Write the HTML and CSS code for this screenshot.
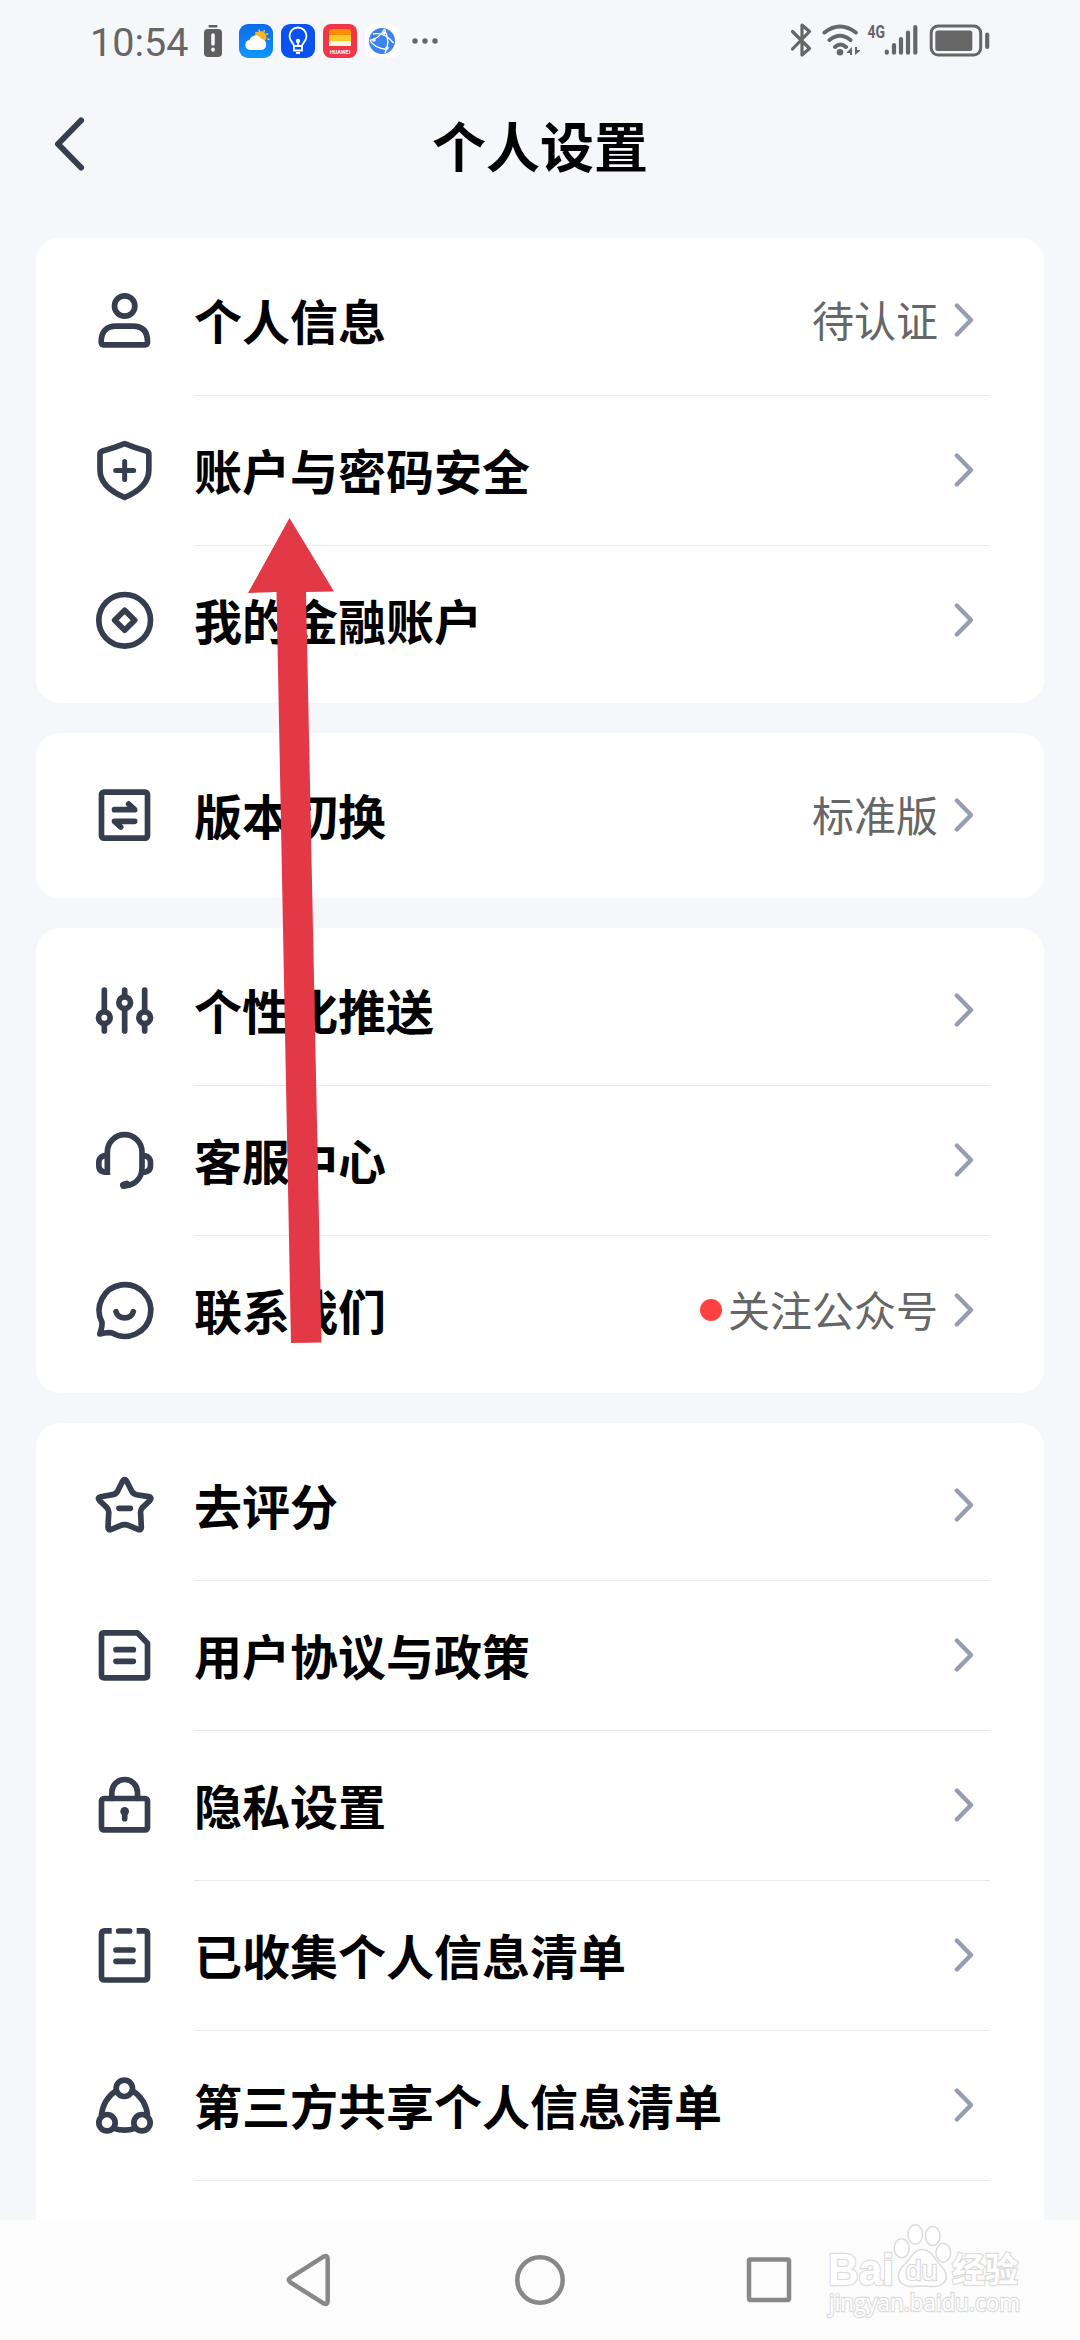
FILE: index.html
```html
<!DOCTYPE html>
<html lang="zh-CN">
<head>
<meta charset="utf-8">
<title>个人设置</title>
<link rel="stylesheet" href="styles.css">
</head>
<body>
<svg class="defs" width="0" height="0">
  <symbol id="chev" viewBox="0 0 24 40"><path d="M4.8 5.5 19 20 4.8 34.5"/></symbol>
</svg>
<div class="screen">
  <header class="status">
    <div class="status-left">
      <span class="time">10:54</span>
      <svg class="battery-low" width="20" height="34" viewBox="0 0 20 34"><rect x="5.500" y="1" width="9" height="2.400" rx="1"/><rect x="1" y="5" width="18" height="28" rx="4"/><path class="mark" d="M10 11v9M10 25.300v.6"/></svg>
      <svg class="app" width="34" height="34" viewBox="0 0 34 34"><defs><linearGradient id="sky" x2="0" y2="1"><stop stop-color="#0b6be6"/><stop offset="1" stop-color="#0c96ff"/></linearGradient></defs><rect width="34" height="34" rx="9" fill="url(#sky)"/><path d="M20 5.500 20.500 7.500M25.500 6 24.800 8M29 9.500 27.300 10.600M30.500 15.500 28.500 15M16.500 8 17.700 9.500" stroke="#ffd75a" stroke-width="1.300"/><circle cx="21.500" cy="13" r="6" fill="#ffb41f"/><path d="M11 26a5 5 0 0 1-.5-9.900 6.500 6.500 0 0 1 12-1.200A5.600 5.600 0 0 1 22 26Z" fill="#fff"/></svg>
      <svg class="app" width="34" height="34" viewBox="0 0 34 34"><rect width="34" height="34" rx="9" fill="#0b53f0"/><g fill="none" stroke="#fff" stroke-width="1.800"><path d="M13 22c0-3-4.500-4.500-4.500-10a8.500 8.500 0 0 1 17 0c0 5.500-4.500 7-4.500 10ZM13 23v3.500h8V23M15 29h4M17 18v4"/></g><circle cx="17" cy="17" r="2.200" fill="#fff"/></svg>
      <svg class="app" width="34" height="34" viewBox="0 0 34 34"><rect width="34" height="34" rx="8" fill="#f13549"/><path d="M6 11V8q0-3 3-3h16q3 0 3 3v3Z" fill="#ff8d00"/><path d="M6 11h22v6H6z" fill="#ffc629"/><path d="M6 17h22v5H6z" fill="#fff6df"/><text x="17" y="29.500" text-anchor="middle" class="brand">HUAWEI</text></svg>
      <svg class="app" width="34" height="34" viewBox="0 0 34 34"><rect width="34" height="34" rx="9" fill="#fff"/><circle cx="17" cy="17" r="13" fill="#3c82f0"/><path d="M5 16.500Q15 14 19.500 5M8 10Q20 8 28.500 19M19.500 5Q26 18 20 29M5 16.500Q9 24 22 25.500" fill="none" stroke="#fff" stroke-width="1.300"/><g fill="#fff"><circle cx="19" cy="9" r="1.700"/><circle cx="9" cy="16" r="1.700"/><circle cx="22" cy="24" r="1.700"/></g></svg>
      <svg class="more" width="26" height="6" viewBox="0 0 26 6"><circle cx="3" cy="3" r="2.700"/><circle cx="13" cy="3" r="2.700"/><circle cx="23" cy="3" r="2.700"/></svg>
    </div>
    <svg class="status-right" width="204" height="40" viewBox="0 0 204 40">
      <path class="line bt" d="M4.500 11.500 21.500 28.500 14 35V5L21.500 11.500 4.500 29"/>
      <path class="line wifi" d="M36.500 12.500Q52 .5 67.800 12.500M41.500 20Q52 11.500 62.500 20M47 27Q52.500 22 58 27"/>
      <circle cx="52" cy="32.300" r="3.300"/><path d="M59 32 64 27V35H62V33H59ZM72 31 67 35V27H69V30H72Z"/>
      <text class="net" x="79.500" y="18" textLength="17.500" lengthAdjust="spacingAndGlyphs">4G</text>
      <path class="line bars" d="M98.800 31.500V32.700M106 25V32.700M113 19V32.700M120 12.500V32.700M127.300 7V32.700"/>
      <rect class="shell" x="143.200" y="6" width="49.500" height="29" rx="7"/><rect x="147.300" y="10.500" width="37" height="20.500" rx="2.500"/><path class="line bars" d="M199.200 14.500V27"/>
    </svg>
  </header>

  <div class="titlebar">
    <svg class="back" width="36" height="60" viewBox="0 0 36 60"><path d="M31 6.500 8 30 31 53.500"/></svg>
    <h1>个人设置</h1>
  </div>

  <main>
    <section class="card">
      <div class="row"><svg class="ico" viewBox="0 0 180 180"><circle cx="92" cy="48" r="30.500"/><path d="M21.500 156C21.500 125 37 108.500 66 108.500H117C146 108.500 160.500 125 160.500 156Q160.500 164.500 153 164.500H29Q21.500 164.500 21.500 156Z"/></svg><div class="body"><span class="label">个人信息</span><span class="value">待认证</span><svg class="chev"><use href="#chev"/></svg></div></div>
      <div class="row"><svg class="ico" viewBox="0 0 180 180"><path d="M92 11Q126 25 157 33 164.500 36 164.500 42V90C164.500 125 140 152 92 172.500 44 152 18 125 18 90V42Q18 36 26 33 58 25 92 11Z"/><path class="thin" d="M65 91.500H119M92 64.500V118.500"/></svg><div class="body"><span class="label">账户与密码安全</span><svg class="chev"><use href="#chev"/></svg></div></div>
      <div class="row"><svg class="ico" viewBox="0 0 180 180"><circle cx="92" cy="91" r="77.500"/><path d="M92 61 122 91 92 121 62 91Z"/></svg><div class="body"><span class="label">我的金融账户</span><svg class="chev"><use href="#chev"/></svg></div></div>
    </section>
    <section class="card">
      <div class="row"><svg class="ico" viewBox="0 0 180 180"><rect x="22.500" y="21.500" width="138" height="138" rx="7"/><path d="M61.500 74H122L104 57M122 109H61.500L80 126"/></svg><div class="body"><span class="label">版本切换</span><span class="value">标准版</span><svg class="chev"><use href="#chev"/></svg></div></div>
    </section>
    <section class="card">
      <div class="row"><svg class="ico" viewBox="0 0 180 180"><path d="M31 30V153M92 30V153M152 30V153"/><g fill="#fff"><circle cx="31" cy="113" r="17.500"/><circle cx="92" cy="68" r="17.500"/><circle cx="152" cy="113" r="17.500"/></g></svg><div class="body"><span class="label">个性化推送</span><svg class="chev"><use href="#chev"/></svg></div></div>
      <div class="row"><svg class="ico" viewBox="0 0 180 180"><path class="butt" d="M40 135V66A52 52 0 0 1 144 66V112C144 145 124 165 92 168"/><path class="butt" d="M40 76C22 76 14.500 85 14.500 97V107C14.500 120 22 126.500 40 126.500M144 76C161 76 169.500 85 169.500 97V107C169.500 120 161 126.500 144 126.500"/><path class="blob" d="M89 166 98 163"/></svg><div class="body"><span class="label">客服中心</span><svg class="chev"><use href="#chev"/></svg></div></div>
      <div class="row"><svg class="ico" viewBox="0 0 180 180"><path d="M24 127Q25 140 17.500 162 38 156 54 158.500A77.500 77.500 0 1 0 24 127Z"/><path d="M66 95C72 120 112 120 118 95"/></svg><div class="body"><span class="label">联系我们</span><i class="dot"></i><span class="value">关注公众号</span><svg class="chev"><use href="#chev"/></svg></div></div>
    </section>
    <section class="card">
      <div class="row"><svg class="ico" viewBox="0 0 180 180"><path d="M85 20Q92 8 99 20L113 48Q117 57 128 59L164 65Q175 67 168 76L146 97Q138 105 140 116L142 157Q142 167 132 163L105 152Q92 146 79 152L52 163Q42 167 42 157L44 116Q46 105 38 97L16 76Q9 67 20 65L56 59Q67 57 71 48Z"/><path d="M75 100H109"/></svg><div class="body"><span class="label">去评分</span><svg class="chev"><use href="#chev"/></svg></div></div>
      <div class="row"><svg class="ico" viewBox="0 0 180 180"><path d="M31 23.500H130L160.500 55V151Q160.500 158.500 152 158.500H31Q22.500 158.500 22.500 151V31Q22.500 23.500 31 23.500ZM66 74H118M66 109H118"/></svg><div class="body"><span class="label">用户协议与政策</span><svg class="chev"><use href="#chev"/></svg></div></div>
      <div class="row"><svg class="ico" viewBox="0 0 180 180"><rect x="22.500" y="70.500" width="138" height="94" rx="7"/><path d="M53.500 70V52A38.500 38.500 0 0 1 130.500 52V70"/><circle class="solid" cx="92" cy="109" r="13"/><path d="M92 110V131"/></svg><div class="body"><span class="label">隐私设置</span><svg class="chev"><use href="#chev"/></svg></div></div>
      <div class="row"><svg class="ico" viewBox="0 0 180 180"><path class="butt" d="M53 17.500H32Q22.500 17.500 22.500 27V156Q22.500 165 32 165H151Q160.500 165 160.500 156V27Q160.500 17.500 151 17.500H128"/><path d="M74 18H107M66 75H117M66 109H117"/></svg><div class="body"><span class="label">已收集个人信息清单</span><svg class="chev"><use href="#chev"/></svg></div></div>
      <div class="row"><svg class="ico" viewBox="0 0 180 180"><circle cx="91" cy="40" r="24.500"/><circle cx="39" cy="143" r="24.500"/><circle cx="144" cy="143" r="24.500"/><path class="butt" d="M67 47Q28 72 22 122M115 47Q155 72 161 122M60 160Q91 171 123 160"/></svg><div class="body"><span class="label">第三方共享个人信息清单</span><svg class="chev"><use href="#chev"/></svg></div></div>
      <div class="row"><div class="ico"></div><div class="body"></div></div>
    </section>
  </main>

  <nav class="nav">
    <svg width="48" height="56" viewBox="0 0 48 56"><path d="M42.700 7V49Q42.700 53.500 38.500 51.300L5.500 30.500Q2 28 5.500 25.500L38.500 4.700Q42.700 2.500 42.700 7Z"/></svg>
    <svg width="56" height="56" viewBox="0 0 56 56"><circle cx="28" cy="28" r="22.700"/></svg>
    <svg width="56" height="56" viewBox="0 0 56 56"><rect x="8" y="7.500" width="40" height="40.500" rx="1.500"/></svg>
  </nav>

  <svg class="arrow" width="90" height="830" viewBox="0 0 90 830"><path d="M41.500 0 86 73.500 58 74 73.500 824.500 43 825 28.500 74 0 75Z"/></svg>

  <svg class="watermark" width="240" height="125" viewBox="0 0 240 125">
    <text class="wm-bai" x="8" y="73.500" textLength="66" lengthAdjust="spacingAndGlyphs">Bai</text>
    <ellipse cx="81.700" cy="37.300" rx="7.500" ry="9.500"/><ellipse cx="95.300" cy="23.500" rx="7.300" ry="9.700"/><ellipse cx="112.700" cy="25" rx="7.300" ry="9.500"/><ellipse cx="123.300" cy="41.700" rx="7.300" ry="9.500"/>
    <path d="M102 38.500C112 38.500 114 48 120 54 127 60 128.500 68 123 72.500 116 77.500 110 75 102 75 94 75 88 77.500 82 72.500 76 68 78 60 84 54 91 48 93 38.500 102 38.500Z"/>
    <text class="wm-du" x="85.500" y="68.500" textLength="32" lengthAdjust="spacingAndGlyphs">du</text>
    <text class="wm-cn" x="132" y="71" textLength="66" lengthAdjust="spacingAndGlyphs">经验</text>
    <text class="wm-url" x="9" y="99.500" textLength="191" lengthAdjust="spacingAndGlyphs">jingyan.baidu.com</text>
  </svg>
</div>
</body>
</html>
```
FILE: styles.css
```css
* { box-sizing: border-box; margin: 0; padding: 0; }
body { background: #f5f7fb; font-family: "Noto Sans CJK SC", sans-serif; }
.defs { position: absolute; }
.screen { position: relative; width: 1080px; height: 2340px; overflow: hidden; display: flex; flex-direction: column; }

.status { height: 82px; flex: none; display: flex; justify-content: space-between; align-items: flex-start; padding: 20px 88px 0 90px; color: #666; }
.status-left { display: flex; align-items: center; height: 42px; }
.time { width: 113px; font: 400 39.500px/42px Roboto, sans-serif; color: #666; padding-top: 4px; }
.battery-low { fill: #5f5f5f; margin-right: 16px; }
.mark { stroke: #f5f7fb; stroke-width: 3.6; stroke-linecap: round; }
.app { margin-right: 8px; }
.brand { font: 700 5.500px Roboto, sans-serif; fill: #fff; }
.more { fill: #666; margin-left: 5px; }
.status-right { fill: #666; }
.line { fill: none; stroke: #666; stroke-linecap: round; stroke-linejoin: round; }
.bt { stroke-width: 3.200; }
.wifi { stroke-width: 4; }
.bars { stroke-width: 4.200; }
.shell { fill: none; stroke: #666; stroke-width: 3; }
.net { font: 700 19px Roboto, sans-serif; fill: #666; }

.titlebar { height: 156px; flex: none; display: grid; grid-template-columns: 86px 1fr 86px; padding-top: 32px; }
.back { margin-left: 50px; fill: none; stroke: #353d4f; stroke-width: 6; stroke-linecap: round; stroke-linejoin: round; }
h1 { font-size: 54px; font-weight: 700; line-height: 62px; text-align: center; color: #000; }

main { flex: 1; min-height: 0; overflow: hidden; display: flex; flex-direction: column; gap: 30px; padding: 0 36px; }
.card { flex: none; background: #fff; border-radius: 24px; padding: 7px 54px 8px 58px; }
.row { height: 150px; display: flex; align-items: center; }
.ico { width: 60px; height: 60px; flex: none; margin-right: 40px; fill: none; stroke: #353d4f; stroke-width: 17; stroke-linecap: round; stroke-linejoin: round; overflow: visible; }
.thin { stroke-width: 15; }
.butt { stroke-linecap: butt; }
.blob { stroke-width: 22; }
.solid { fill: #353d4f; stroke: none; }
.body { flex: 1; height: 150px; display: flex; align-items: center; padding-right: 14px; }
.row + .row .body { box-shadow: inset 0 1px #e9eaec; }
.label { flex: 1; font-size: 48px; line-height: 70px; font-weight: 700; color: #000; padding-bottom: 2px; }
.value { font-size: 42px; line-height: 60px; color: #666; margin-right: 14px; padding-bottom: 3px; }
.dot { width: 22px; height: 22px; border-radius: 50%; background: #ff4144; margin-right: 6px; }
.chev { width: 24px; height: 40px; fill: none; stroke: #959daf; stroke-width: 4.400; stroke-linecap: round; stroke-linejoin: round; }

.nav { height: 120px; flex: none; background: #fcfcfc; display: flex; align-items: center; padding-left: 285px; fill: none; stroke: #888; stroke-width: 4.500; }
.nav svg { margin-right: 179px; }
.nav svg + svg { margin-right: 173px; }

.arrow { position: absolute; left: 248px; top: 518px; fill: #e33845; }

.watermark { position: absolute; left: 820px; top: 2211px; fill: #fff; stroke: #dcdcdc; stroke-width: 1.500; }
.watermark text { paint-order: stroke; stroke-width: 2.500; }
.wm-bai { font: 700 45px "Liberation Sans", sans-serif; }
.wm-du { font: 400 27px "Liberation Sans", sans-serif; }
.wm-cn { font: 700 34px "Noto Sans CJK SC", sans-serif; }
.wm-url { font: 400 24px "Open Sans", sans-serif; }
```
